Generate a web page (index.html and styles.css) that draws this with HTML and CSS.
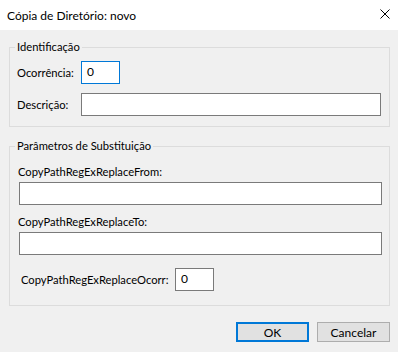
FILE: index.html
```html
<!DOCTYPE html>
<html lang="pt">
<head>
  <meta charset="UTF-8" />
  <title>Cópia de Diretório: novo</title>
  <link rel="stylesheet" href="styles.css">
</head>
<body>

  <!-- Title bar -->
  <div class="titlebar">
    <span class="title">Cópia de Diretório: novo</span>
    <svg class="close" width="10" height="10" viewBox="0 0 10 10">
      <path d="M0.5 0.5 L9.5 9.5 M9.5 0.5 L0.5 9.5" stroke="#000" stroke-width="1" fill="none" />
    </svg>
  </div>

  <div class="content">
    <!-- Identificação -->
    <fieldset class="group group-id">
      <legend>Identificação</legend>
      <div class="row row-first">
        <label class="label-short">Ocorrência:</label>
        <div class="input input-small focused">0</div>
      </div>
      <div class="row">
        <label class="label-short">Descrição:</label>
        <div class="input input-wide"></div>
      </div>
    </fieldset>

    <!-- Parâmetros -->
    <fieldset class="group group-params">
      <legend>Parâmetros de Substituição</legend>
      <div class="stack stack-first">
        <label>CopyPathRegExReplaceFrom:</label>
        <div class="input input-full"></div>
      </div>
      <div class="stack">
        <label>CopyPathRegExReplaceTo:</label>
        <div class="input input-full"></div>
      </div>
      <div class="row row-ocorr">
        <label class="label-long">CopyPathRegExReplaceOcorr:</label>
        <div class="input input-small">0</div>
      </div>
    </fieldset>

    <!-- Buttons -->
    <div class="buttons">
      <button class="btn btn-default">OK</button>
      <button class="btn">Cancelar</button>
    </div>
  </div>

</body>
</html>
```

FILE: styles.css
```css
* {
  box-sizing: border-box;
}

body {
  margin: 0;
  width: 398px;
  height: 352px;
  overflow: hidden;
  background-color: #f0f0f0;
  font-family: 'Lato', sans-serif;
  font-size: 11.2px;
  color: #000;
}

.titlebar {
  height: 30px;
  background-color: #fff;
  display: flex;
  align-items: center;
  justify-content: space-between;
  padding: 0 8px 0 7px;
  font-size: 12px;
}

.close {
  display: block;
  margin-top: -2px;
}

.content {
  padding: 9px 8px 0 9px;
}

.group {
  margin: 0;
  padding: 0 0 10px 0;
  border: 1px solid #dcdcdc;
  min-width: 0;
}

.group legend {
  margin-left: 5px;
  padding: 0 2px;
  line-height: 16px;
}

.group-params {
  margin-top: 11px;
  padding-bottom: 14px;
}

.row {
  display: flex;
  align-items: center;
  margin: 9px 8px 0 7px;
}

.row-first {
  margin-top: 6px;
}

.row label {
  flex-shrink: 0;
}

.label-short {
  width: 64px;
}

.row-ocorr {
  margin: 13px 0 0 11px;
}

.label-long {
  width: 154px;
}

.stack {
  margin: 9px 7px 0 9px;
}

.stack-first {
  margin-top: 10px;
}

.stack label {
  display: block;
  line-height: 16px;
  margin: 0 0 2px -1px;
}

.input {
  height: 23px;
  background-color: #fff;
  border: 1px solid #7a7a7a;
  padding: 1px 5px;
  line-height: 18px;
  font-size: 12px;
}

.input.focused {
  border-color: #0078d7;
}

.input-small {
  width: 39px;
}

.input-wide {
  flex: 1;
}

.input-full {
  width: 100%;
}

.buttons {
  display: flex;
  justify-content: flex-end;
  gap: 8px;
  margin-top: 16px;
}

.btn {
  width: 73px;
  height: 20px;
  padding: 0;
  background-color: #e1e1e1;
  border: 1px solid #adadad;
  font-family: 'Lato', sans-serif;
  font-size: 12px;
  font-weight: 400;
  color: #000;
}

.btn-default {
  border: 2px solid #0078d7;
}
```
